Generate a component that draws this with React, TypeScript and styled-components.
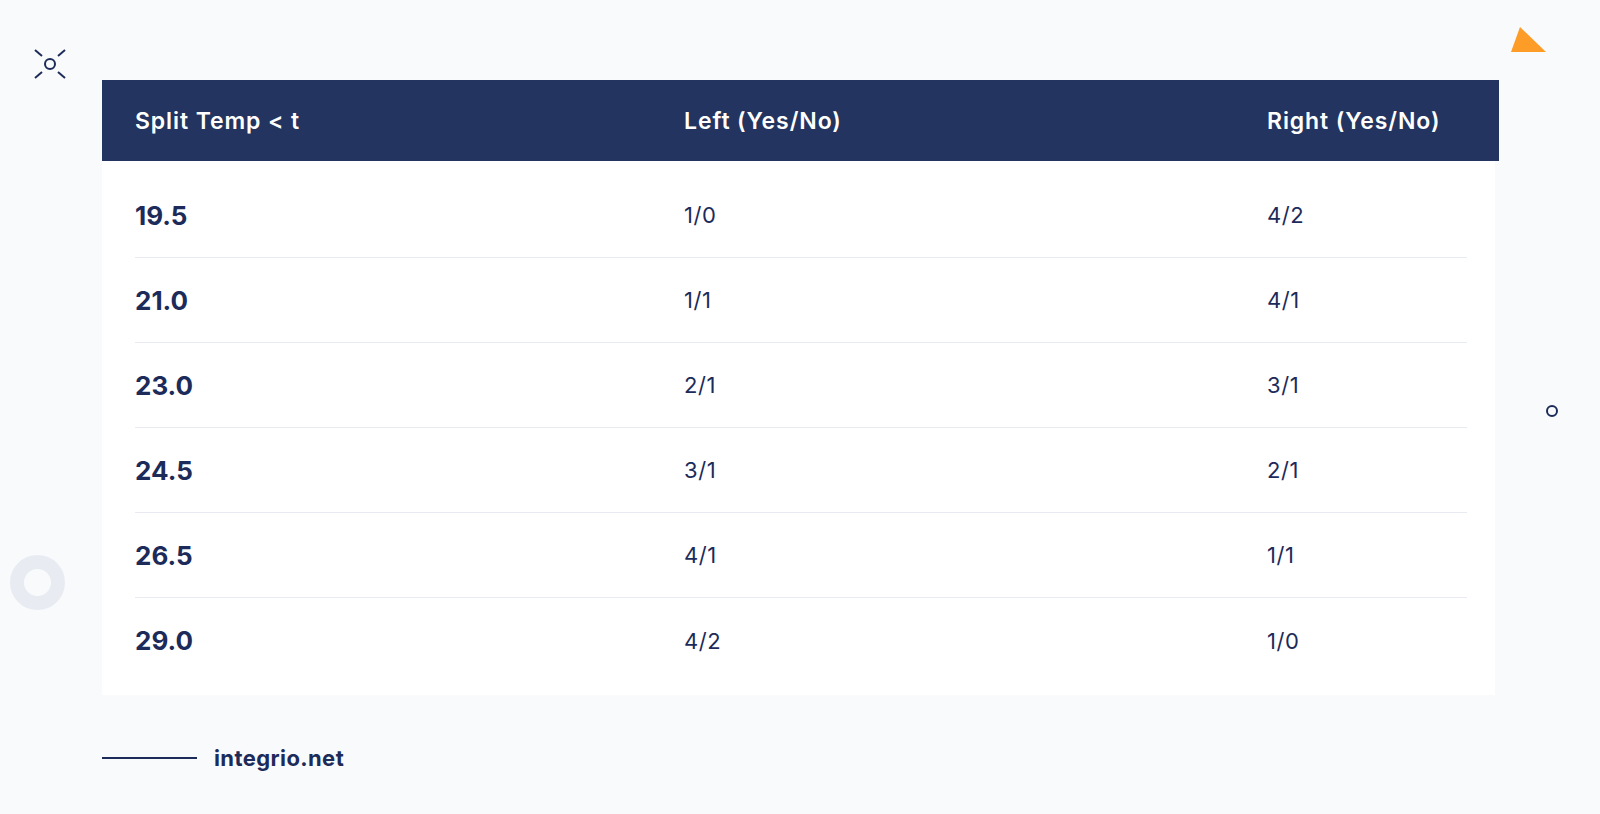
import React from 'react';
import styled, { createGlobalStyle } from 'styled-components';

const GlobalStyle = createGlobalStyle`
  html, body {
    margin: 0;
    padding: 0;
    background: #f9fafc;
  }

  body {
    font-family: 'Inter', 'Open Sans', 'Liberation Sans', sans-serif;
    color: #1c2b59;
  }
`;

const Page = styled.div`
  position: relative;
  width: 1600px;
  height: 814px;
  overflow: hidden;
  background: #f9fafc;
  padding: 80px 0 0 102px;
  box-sizing: border-box;
`;

const Table = styled.div`
  width: 1397px;
  display: flex;
  flex-direction: column;
`;

const HeaderRow = styled.div`
  display: grid;
  grid-template-columns: 549px 583px 1fr;
  align-items: center;
  height: 81px;
  padding-left: 33px;
  background: #22345f;
  color: #ffffff;
  font-size: 23px;
  font-weight: 600;
  letter-spacing: 0.9px;
  box-sizing: border-box;
`;

const Body = styled.div`
  width: 1393px;
  background: #ffffff;
  padding: 12px 28px 12px 33px;
  box-sizing: border-box;
`;

const Row = styled.div`
  display: grid;
  grid-template-columns: 549px 583px 1fr;
  align-items: center;
  height: 85px;
  box-sizing: border-box;
  border-bottom: 1px solid #e9ebf2;

  &:last-child {
    border-bottom: none;
  }
`;

const Cell = styled.span<{ $strong?: boolean }>`
  font-size: ${(p) => (p.$strong ? '26px' : '22px')};
  font-weight: ${(p) => (p.$strong ? 700 : 400)};
  letter-spacing: ${(p) => (p.$strong ? '0' : '0.6px')};
  color: #1c2b59;
`;

const Footer = styled.div`
  display: flex;
  align-items: center;
  gap: 17px;
  margin-top: 50px;
`;

const FooterLine = styled.div`
  width: 95px;
  height: 2px;
  background: #1c2b59;
`;

const FooterText = styled.span`
  font-size: 22px;
  font-weight: 700;
  letter-spacing: 0.4px;
  color: #1c2b59;
`;

const Deco = styled.div<{ $x: number; $y: number }>`
  position: absolute;
  left: ${(p) => p.$x}px;
  top: ${(p) => p.$y}px;
  line-height: 0;
`;

const Ring = styled.div`
  position: absolute;
  left: 10px;
  top: 555px;
  width: 27px;
  height: 27px;
  border: 14px solid #e8ecf2;
  border-radius: 50%;
`;

const Dot = styled.div`
  position: absolute;
  left: 1546px;
  top: 405px;
  width: 8px;
  height: 8px;
  border: 2px solid #1c2b59;
  border-radius: 50%;
`;

const rows = [
  ['19.5', '1/0', '4/2'],
  ['21.0', '1/1', '4/1'],
  ['23.0', '2/1', '3/1'],
  ['24.5', '3/1', '2/1'],
  ['26.5', '4/1', '1/1'],
  ['29.0', '4/2', '1/0'],
];

const App: React.FC = () => {
  return (
    <>
      <GlobalStyle />
      <Page>
        <Deco $x={30} $y={44}>
          <svg width="40" height="40" viewBox="0 0 40 40" fill="none" stroke="#1c2b59" strokeWidth="2">
            <circle cx="20" cy="20" r="5" />
            <line x1="5" y1="6" x2="12" y2="12" />
            <line x1="35" y1="6" x2="28" y2="12" />
            <line x1="5" y1="34" x2="12" y2="28" />
            <line x1="35" y1="34" x2="28" y2="28" />
          </svg>
        </Deco>
        <Deco $x={1508} $y={24}>
          <svg width="42" height="32" viewBox="0 0 42 32">
            <polygon points="12,3 3,28 38,28" fill="#fd9d27" />
          </svg>
        </Deco>
        <Ring />
        <Dot />

        <Table>
          <HeaderRow>
            <span>Split Temp &lt; t</span>
            <span>Left (Yes/No)</span>
            <span>Right (Yes/No)</span>
          </HeaderRow>
          <Body>
            {rows.map(([t, left, right]) => (
              <Row key={t}>
                <Cell $strong>{t}</Cell>
                <Cell>{left}</Cell>
                <Cell>{right}</Cell>
              </Row>
            ))}
          </Body>
        </Table>

        <Footer>
          <FooterLine />
          <FooterText>integrio.net</FooterText>
        </Footer>
      </Page>
    </>
  );
};

export default App;
